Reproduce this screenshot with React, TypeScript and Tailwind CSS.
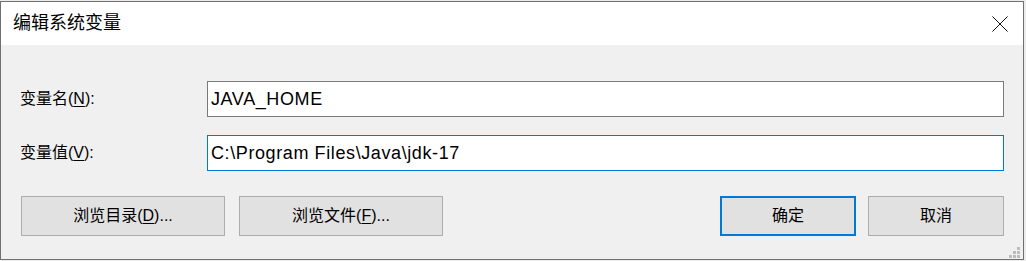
import React from 'react';

const ui = { fontFamily: '"Liberation Sans", "Noto Sans CJK SC", sans-serif' };

function Underlined({ children }: { children: React.ReactNode }) {
  return <span className="underline underline-offset-2">{children}</span>;
}

function Field({ label, hotkey, value, focused }: { label: string; hotkey: string; value: string; focused?: boolean }) {
  return (
    <div className="flex items-center">
      <div className="w-[187px] text-[16px] text-black">
        {label}(<Underlined>{hotkey}</Underlined>):
      </div>
      <div
        className={`w-[797px] h-[36px] bg-white flex items-center pl-[3px] text-[18px] tracking-[0.6px] text-black border ${
          focused ? 'border-[#0078d7]' : 'border-[#7a7a7a]'
        }`}
      >
        {value}
      </div>
    </div>
  );
}

function DialogButton({ children, width, primary }: { children: React.ReactNode; width: string; primary?: boolean }) {
  return (
    <button
      className={`${width} h-[40px] bg-[#e1e1e1] text-[16px] text-black flex items-center justify-center ${
        primary ? 'border-2 border-[#0078d7]' : 'border border-[#adadad]'
      }`}
    >
      {children}
    </button>
  );
}

export default function App() {
  return (
    <div className="w-[1026px] h-[261px] bg-[#ececec] pt-[1px]" style={ui}>
      <div className="w-[1024px] h-[259px] border border-[#707070] flex flex-col">
        {/* Title bar */}
        <div className="h-[43px] bg-white flex items-center justify-between pl-[12px] pr-[15px]">
          <span className="text-[18px] text-black">编辑系统变量</span>
          <svg width="16" height="16" viewBox="0 0 16 16" className="mt-[1px]">
            <path d="M0.5 0.5 L15.5 15.5 M15.5 0.5 L0.5 15.5" stroke="#111" strokeWidth="1" fill="none" />
          </svg>
        </div>

        {/* Body */}
        <div className="flex-1 bg-[#f0f0f0] relative pl-[19px] pr-[19px] pt-[36px]">
          <div className="flex flex-col gap-[18px]">
            <Field label="变量名" hotkey="N" value="JAVA_HOME" />
            <Field label="变量值" hotkey="V" value="C:\Program Files\Java\jdk-17" focused />
          </div>

          <div className="flex justify-between mt-[25px] pl-[1px]">
            <div className="flex gap-[14px]">
              <DialogButton width="w-[204px]">
                浏览目录(<Underlined>D</Underlined>)...
              </DialogButton>
              <DialogButton width="w-[204px]">
                浏览文件(<Underlined>F</Underlined>)...
              </DialogButton>
            </div>
            <div className="flex gap-[12px]">
              <DialogButton width="w-[136px]" primary>
                确定
              </DialogButton>
              <DialogButton width="w-[136px]">取消</DialogButton>
            </div>
          </div>

          {/* Size grip */}
          <svg width="11" height="11" viewBox="0 0 11 11" className="absolute right-[3px] bottom-[1px]">
            <rect x="8" y="0" width="3" height="3" fill="#bdbdbd" />
            <rect x="4" y="4" width="3" height="3" fill="#bdbdbd" />
            <rect x="8" y="4" width="3" height="3" fill="#bdbdbd" />
            <rect x="0" y="8" width="3" height="3" fill="#bdbdbd" />
            <rect x="4" y="8" width="3" height="3" fill="#bdbdbd" />
            <rect x="8" y="8" width="3" height="3" fill="#bdbdbd" />
          </svg>
        </div>
      </div>
    </div>
  );
}
